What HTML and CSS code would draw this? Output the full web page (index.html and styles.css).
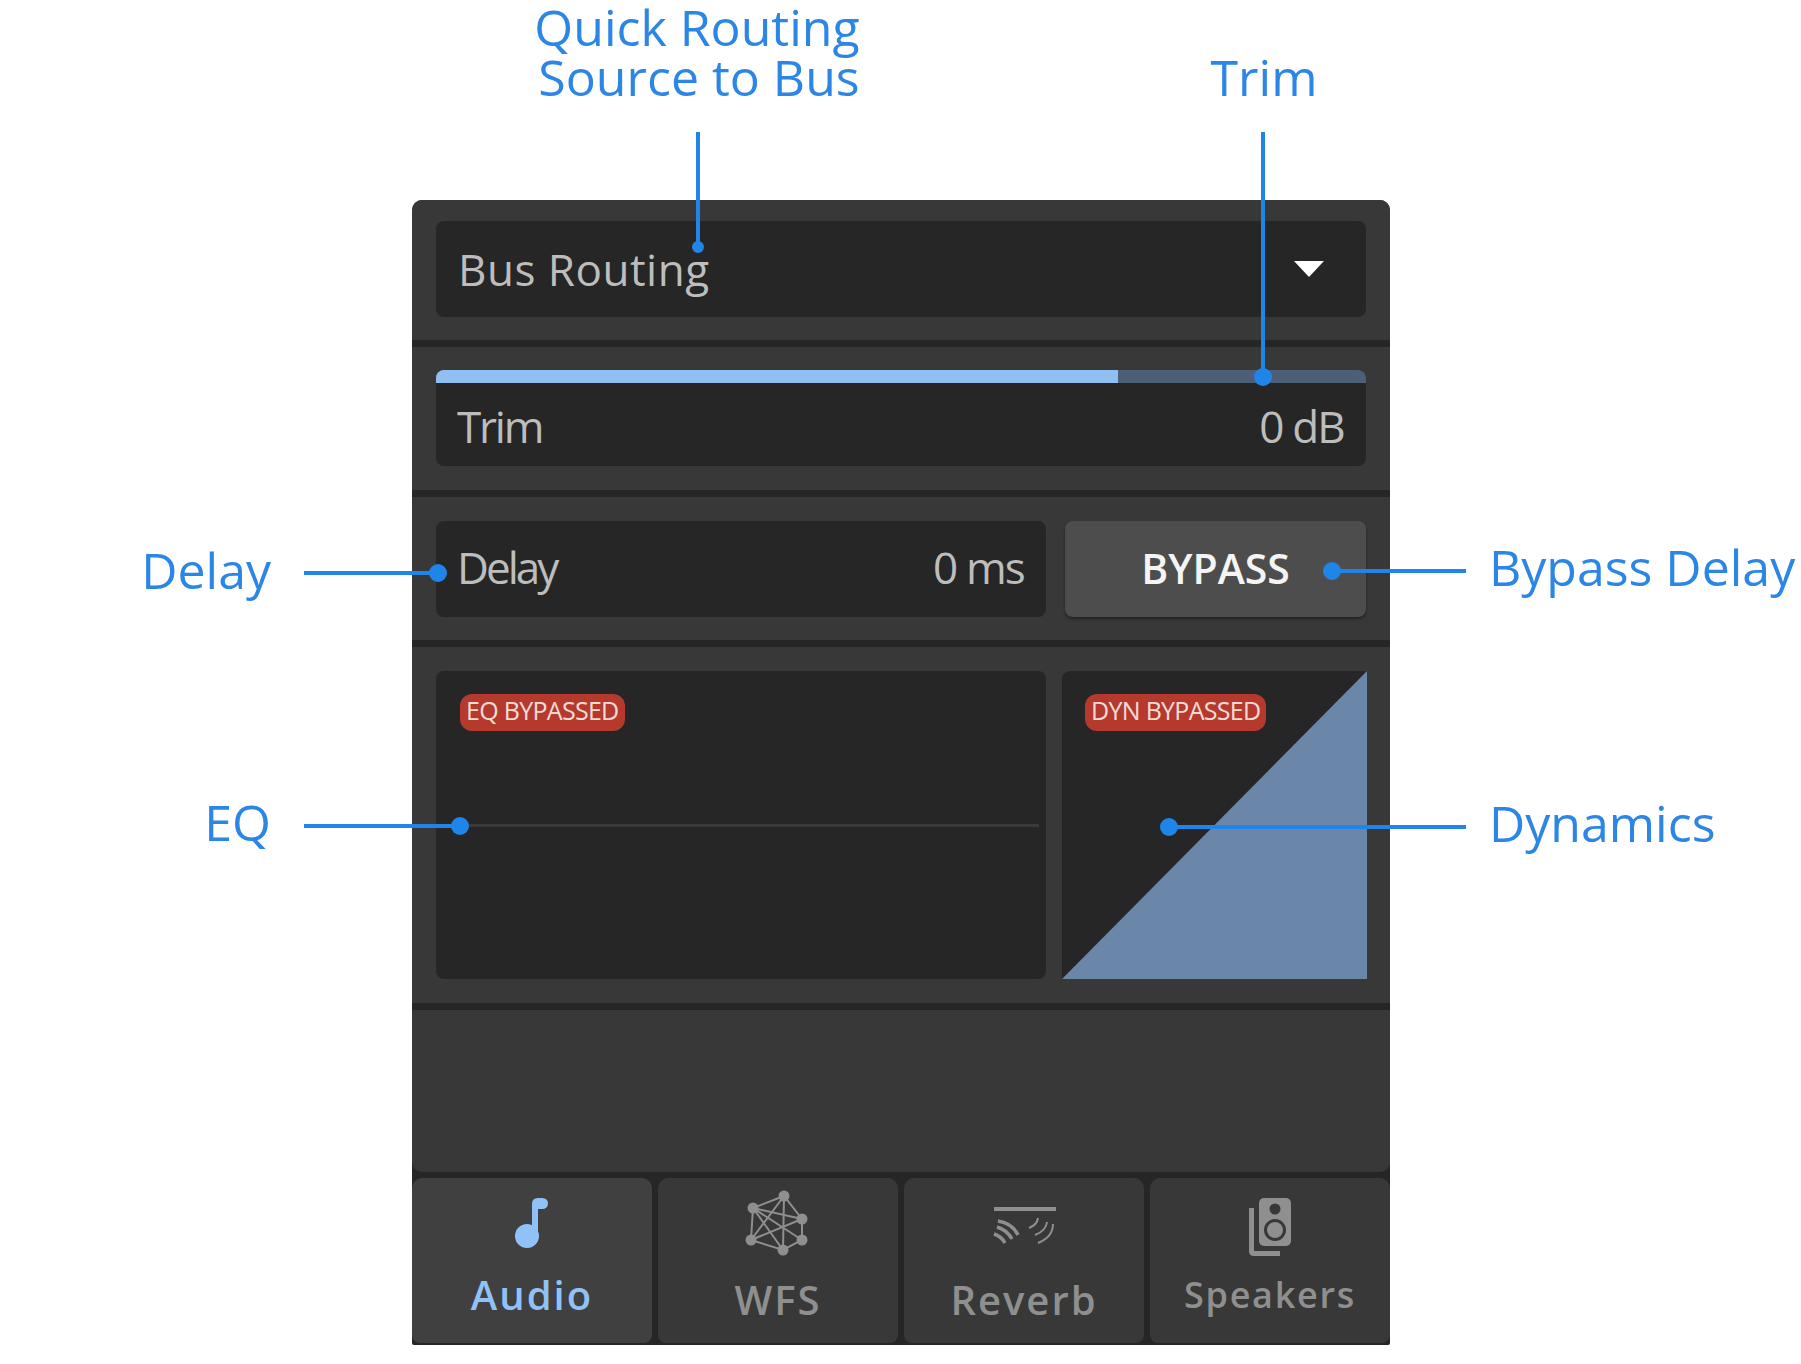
FILE: index.html
```html
<!DOCTYPE html>
<html lang="en">
<head>
<meta charset="UTF-8">
<title>Channel strip callouts</title>
<link rel="stylesheet" href="styles.css">
</head>
<body>

<div class="figure">
    <!-- Channel strip panel -->
    <div class="panel">
        <div class="section section-select">
            <div class="field">
                <span class="text-bus">Bus Routing</span>
                <span class="arrow"></span>
            </div>
        </div>

        <div class="section section-trim">
            <div class="trim">
                <div class="trim-bar"><div class="trim-fill"></div></div>
                <div class="trim-row">
                    <span class="text-trim">Trim</span>
                    <span class="text-value">0 dB</span>
                </div>
            </div>
        </div>

        <div class="section section-delay">
            <div class="field">
                <span class="text-delay">Delay</span>
                <span class="text-value">0 ms</span>
            </div>
            <div class="bypass">BYPASS</div>
        </div>

        <div class="section section-graphs">
            <div class="graph graph-eq">
                <span class="badge">EQ BYPASSED</span>
                <div class="eq-line"></div>
            </div>
            <div class="graph graph-dyn">
                <svg class="dyn-curve" viewBox="0 0 305 308" preserveAspectRatio="none">
                    <polygon points="0,308 305,0 305,308"></polygon>
                </svg>
                <span class="badge">DYN BYPASSED</span>
            </div>
        </div>

        <div class="section-empty"></div>

        <!-- Bottom tabs -->
        <div class="tabs">
            <div class="tab tab-audio active">
                <svg class="tab-icon" viewBox="0 0 80 64">
                    <circle cx="35" cy="42" r="12"></circle>
                    <path d="M43 42V9" class="note-stem"></path>
                    <rect x="40" y="4" width="16" height="11" rx="5.500"></rect>
                </svg>
                <span class="tab-label">Audio</span>
            </div>
            <div class="tab tab-wfs">
                <svg class="tab-icon" viewBox="0 0 80 64">
                    <g class="net-lines">
                        <path d="M46 5L15 17L13 49L45 59L64 49L64 28L46 5Z"></path>
                        <path d="M46 5L45 59M46 5L13 49M15 17L64 28M15 17L64 49M15 17L45 59M13 49L64 28"></path>
                    </g>
                    <circle cx="46" cy="5" r="5.500"></circle>
                    <circle cx="15" cy="17" r="5.500"></circle>
                    <circle cx="64" cy="28" r="5.500"></circle>
                    <circle cx="13" cy="49" r="5.500"></circle>
                    <circle cx="64" cy="49" r="5.500"></circle>
                    <circle cx="45" cy="59" r="5.500"></circle>
                </svg>
                <span class="tab-label">WFS</span>
            </div>
            <div class="tab tab-reverb">
                <svg class="tab-icon" viewBox="0 0 80 64">
                    <rect x="10" y="13" width="62" height="4"></rect>
                    <g class="rev-thick">
                        <path d="M14 27Q28 29 34 41"></path>
                        <path d="M13 33Q23 36 28 45"></path>
                        <path d="M10 40Q17 42 21 49"></path>
                    </g>
                    <g class="rev-thin">
                        <path d="M45 34Q53 31 54 24"></path>
                        <path d="M51 41Q62 37 63 28"></path>
                        <path d="M54 49Q69 43 69 30"></path>
                    </g>
                </svg>
                <span class="tab-label">Reverb</span>
            </div>
            <div class="tab tab-speakers">
                <svg class="tab-icon" viewBox="0 0 80 64">
                    <rect x="29" y="2" width="32" height="48" rx="5"></rect>
                    <circle class="cone" cx="45" cy="13" r="5.500"></circle>
                    <circle class="ring" cx="45" cy="34" r="9.500"></circle>
                    <path class="speaker-back" d="M21.500 12V55Q21.500 57.500 24 57.500H50"></path>
                </svg>
                <span class="tab-label">Speakers</span>
            </div>
        </div>
    </div>

    <!-- Callouts over the panel -->
    <div class="note note-center note-routing">Quick Routing<br><span class="note-second">Source to Bus</span></div>
    <div class="note note-center note-trim">Trim</div>
    <div class="note note-delay">Delay</div>
    <div class="note note-bypass">Bypass Delay</div>
    <div class="note note-eq">EQ</div>
    <div class="note note-dyn">Dynamics</div>

    <div class="leader leader-routing"><i class="dot dot-small"></i></div>
    <div class="leader leader-trim"><i class="dot"></i></div>
    <div class="leader leader-delay"><i class="dot"></i></div>
    <div class="leader leader-bypass"><i class="dot"></i></div>
    <div class="leader leader-eq"><i class="dot"></i></div>
    <div class="leader leader-dyn"><i class="dot"></i></div>
</div>

</body>
</html>
```

FILE: styles.css
```css
body {
    margin: 0;
    background-color: #fff;
    font-family: "Open Sans", sans-serif;
}
.figure {
    position: relative;
    width: 1801px;
    height: 1364px;
    padding: 200px 0 0 412px;
    box-sizing: border-box;
    overflow: hidden;
}
.panel {
    width: 978px;
    height: 1145px;
    background: #262626;
    border-radius: 10px 10px 2px 2px;
    overflow: hidden;
    color: #bdbdbd;
    font-size: 44px;
    display: flex;
    flex-direction: column;
}
.section {
    flex: none;
    height: 143px;
    padding: 24px 24px 0;
    margin-bottom: 7px;
    background: #383838;
    box-sizing: border-box;
}
.section-select {
    height: 140px;
    padding-top: 21px;
}
.section-trim {
    padding-top: 23px;
}
.section-delay {
    display: flex;
    gap: 19px;
}
.section-delay .field {
    padding: 0 22px 5px 21px;
}
.section-graphs {
    display: flex;
    gap: 16px;
    height: 356px;
    padding-right: 23px;
}
.section-empty {
    flex: none;
    height: 162px;
    background: #383838;
    border-radius: 0 0 10px 10px;
}
.field {
    flex: 0 0 610px;
    height: 96px;
    padding: 0 22px;
    background: #262626;
    border-radius: 8px;
    display: flex;
    align-items: center;
    justify-content: space-between;
    box-sizing: border-box;
}
.text-bus {
    letter-spacing: 0.5px;
}
.text-trim {
    letter-spacing: -2.2px;
}
.text-delay {
    letter-spacing: -3px;
}
.text-value {
    letter-spacing: -1.8px;
}
.arrow {
    margin-right: 20px;
    border-left: 15px solid transparent;
    border-right: 15px solid transparent;
    border-top: 16px solid #fff;
}
.trim {
    height: 96px;
    background: #262626;
    border-radius: 8px;
    overflow: hidden;
}
.trim-bar {
    height: 13px;
    background: #4d5f78;
}
.trim-fill {
    width: 682px;
    height: 100%;
    background: #90c0f2;
}
.trim-row {
    height: 83px;
    padding: 3px 22px 0 21px;
    display: flex;
    align-items: center;
    justify-content: space-between;
    box-sizing: border-box;
}
.bypass {
    flex: 1;
    height: 96px;
    background: #4d4d4d;
    border-radius: 8px;
    box-shadow: 0 2px 3px rgba(0,0,0,0.4);
    color: #f4f4f4;
    font-weight: 600;
    font-size: 41px;
    line-height: 94px;
    text-align: center;
}
.graph {
    position: relative;
    height: 308px;
    background: #262626;
    border-radius: 8px;
    box-sizing: border-box;
    padding: 23px 0 0 24px;
    display: flex;
    align-items: flex-start;
}
.graph-eq {
    flex: 0 0 610px;
}
.graph-dyn {
    flex: 1;
    padding-left: 23px;
    border-radius: 8px 0 0 0;
}
.badge {
    position: relative;
    height: 37px;
    padding: 0 6px;
    background: #b53a2d;
    border-radius: 12px;
    color: #f3dcd8;
    font-size: 25px;
    letter-spacing: -0.7px;
    line-height: 33px;
    white-space: nowrap;
}
.eq-line {
    position: absolute;
    left: 24px;
    right: 7px;
    top: 153px;
    height: 3px;
    background: #3a3a3a;
}
.dyn-curve {
    position: absolute;
    left: 0;
    top: 0;
    width: 100%;
    height: 100%;
    fill: #6a86a8;
}
.tabs {
    flex: none;
    display: grid;
    grid-template-columns: repeat(4, 1fr);
    gap: 6px;
    margin-top: 6px;
    height: 165px;
}
.tab {
    background: #383838;
    border-radius: 10px 10px 8px 8px;
    display: flex;
    flex-direction: column;
    align-items: center;
    color: #8f8f8f;
    fill: #8f8f8f;
}
.tab.active {
    background: #404040;
    color: #90c2f7;
    fill: #90c2f7;
}
.tab-icon {
    display: block;
    width: 80px;
    height: 64px;
    overflow: visible;
}
.tab-label {
    font-size: 40px;
    font-weight: 600;
    letter-spacing: 2px;
    line-height: 48px;
}
.tab-audio .tab-icon {
    margin-top: 16px;
}
.tab-audio .tab-label {
    margin-top: 13px;
}
.tab-wfs .tab-icon {
    margin-top: 13px;
}
.tab-wfs .tab-label {
    margin-top: 21px;
}
.tab-reverb .tab-icon {
    margin-top: 16px;
}
.tab-reverb .tab-label {
    margin-top: 18px;
}
.tab-speakers .tab-icon {
    margin-top: 18px;
}
.tab-speakers .tab-label {
    margin-top: 11px;
    font-size: 36px;
    letter-spacing: 1.7px;
}
.note-stem {
    fill: none;
    stroke: #90c2f7;
    stroke-width: 6;
}
.net-lines path {
    fill: none;
    stroke: #8f8f8f;
    stroke-width: 2;
}
.rev-thick path {
    fill: none;
    stroke: #8f8f8f;
    stroke-width: 3.500;
}
.rev-thin path {
    fill: none;
    stroke: #8f8f8f;
    stroke-width: 2;
}
.cone {
    fill: #383838;
}
.ring {
    fill: none;
    stroke: #383838;
    stroke-width: 3;
}
.speaker-back {
    fill: none;
    stroke: #8f8f8f;
    stroke-width: 5;
}
.note {
    position: absolute;
    color: #2b86e5;
    font-size: 50px;
    line-height: 50px;
    white-space: nowrap;
}
.note-center {
    text-align: center;
    transform: translateX(-50%);
}
.note-second {
    margin-left: 4px;
}
.note-routing {
    left: 697px;
    top: 2px;
}
.note-trim {
    left: 1264px;
    top: 52px;
}
.note-delay {
    right: 1530px;
    top: 545px;
}
.note-bypass {
    left: 1489px;
    top: 542px;
}
.note-eq {
    right: 1530px;
    top: 797px;
}
.note-dyn {
    left: 1489px;
    top: 798px;
}
.leader {
    position: absolute;
    background: #1f85e8;
}
.leader-routing {
    left: 696px;
    top: 132px;
    width: 4px;
    height: 115px;
}
.leader-trim {
    left: 1261px;
    top: 132px;
    width: 4px;
    height: 245px;
}
.leader-delay {
    left: 304px;
    top: 571px;
    width: 134px;
    height: 4px;
}
.leader-bypass {
    left: 1332px;
    top: 569px;
    width: 134px;
    height: 4px;
}
.leader-eq {
    left: 304px;
    top: 824px;
    width: 156px;
    height: 4px;
}
.leader-dyn {
    left: 1169px;
    top: 825px;
    width: 297px;
    height: 4px;
}
.dot {
    position: absolute;
    width: 18px;
    height: 18px;
    border-radius: 50%;
    background: #1f85e8;
}
.dot-small {
    left: -4px;
    bottom: -6px;
    width: 12px;
    height: 12px;
}
.leader-trim .dot {
    left: -7px;
    bottom: -9px;
}
.leader-delay .dot,
.leader-eq .dot {
    right: -9px;
    top: -7px;
}
.leader-bypass .dot,
.leader-dyn .dot {
    left: -9px;
    top: -7px;
}
```
